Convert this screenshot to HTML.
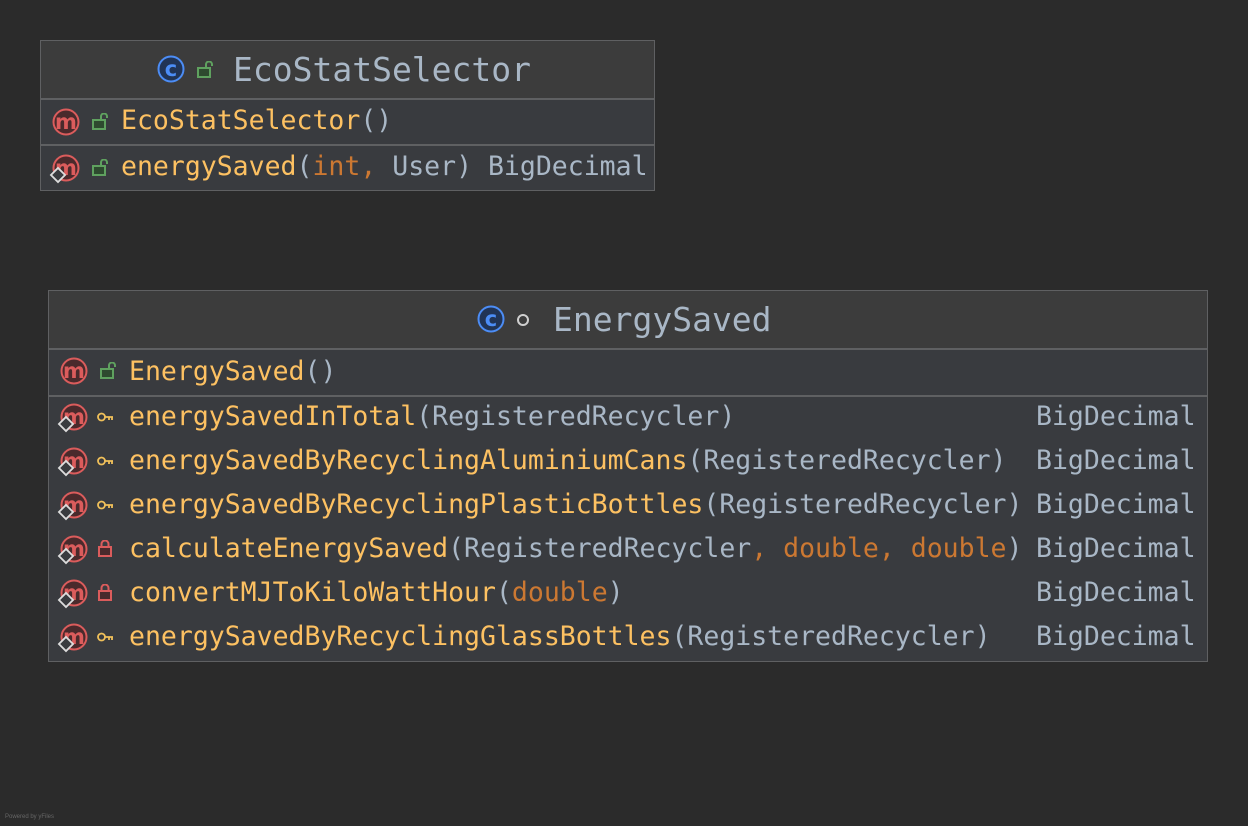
<!DOCTYPE html>
<html><head><meta charset="utf-8"><style>
body{margin:0;width:1248px;height:826px;background:#2b2b2b;position:relative;overflow:hidden;font-family:"DejaVu Sans Mono","Liberation Mono",monospace}
.box{position:absolute;border:1px solid #5f6062;background:#393b3f}
.hdr{position:absolute;left:0;right:0;top:0;height:57px;background:#3c3c3c;border-bottom:2px solid #5f6062}
.sep{position:absolute;left:0;right:0;height:2px;background:#5f6062}
.t{position:absolute;white-space:pre;font-size:26.5px;line-height:44px;letter-spacing:0}
.title{position:absolute;white-space:pre;font-size:33px;line-height:57px;color:#a9b7c6}
.n{color:#fdc162}.p{color:#a9b7c6}.k{color:#cc7832}
svg{position:absolute}
</style></head><body>
<svg width="0" height="0" style="position:absolute"><defs>
<g id="m"><circle cx="14" cy="14" r="12.5" fill="#4a2a2c" stroke="#db5c5c" stroke-width="2"/><text x="14" y="21" font-family="DejaVu Sans" font-size="21" font-weight="bold" fill="#db5c5c" text-anchor="middle">m</text></g>
<g id="d"><rect x="-5" y="-5" width="10" height="10" transform="rotate(45)" fill="#393b3f" stroke="#dcdcdc" stroke-width="1.8"/></g>
<g id="lk"><rect x="1" y="7" width="12" height="9" fill="#2e4a2f" stroke="#5fa15f" stroke-width="2"/><path d="M9 7V3.5a3 3 0 0 1 6 0V5" fill="none" stroke="#5fa15f" stroke-width="2"/></g>
<g id="rl"><rect x="1" y="7" width="12" height="9" fill="#4a2a2c" stroke="#db5c5c" stroke-width="2"/><path d="M3.5 7V4a3.5 3.5 0 0 1 7 0V7" fill="none" stroke="#db5c5c" stroke-width="2"/></g>
<g id="ky"><circle cx="4.5" cy="5" r="3.5" fill="none" stroke="#f0c05a" stroke-width="1.8"/><path d="M8 5H16M12 5V8M15 5V8" fill="none" stroke="#f0c05a" stroke-width="1.8"/></g>
<g id="c"><circle cx="14" cy="14" r="12.5" fill="#213456" stroke="#4c8df6" stroke-width="2"/><text x="14" y="21" font-family="DejaVu Sans" font-size="21" font-weight="bold" fill="#4c8df6" text-anchor="middle">c</text></g>
</defs></svg>

<div class="box" style="left:40px;top:40px;width:613px;height:149px">
 <div class="hdr"></div>
 <div class="sep" style="top:103px"></div>
 <div class="title" style="left:192px;top:0">EcoStatSelector</div>
 <div class="t n" style="left:80px;top:58px">EcoStatSelector<span class="p">()</span></div>
 <div class="t n" style="left:80px;top:104px">energySaved<span class="p">(</span><span class="k">int, </span><span class="p">User) BigDecimal</span></div>
</div>
<svg style="left:157px;top:55px" width="30" height="30"><use href="#c"/></svg>
<svg style="left:197px;top:61px" width="18" height="18"><use href="#lk"/></svg>
<svg style="left:52px;top:108px" width="30" height="30"><use href="#m"/></svg>
<svg style="left:92px;top:113px" width="18" height="18"><use href="#lk"/></svg>
<svg style="left:52px;top:154px" width="30" height="30"><use href="#m"/></svg>
<svg style="left:92px;top:159px" width="18" height="18"><use href="#lk"/></svg>
<svg style="left:48px;top:165px" width="20" height="20"><g transform="translate(10,10)"><use href="#d"/></g></svg>

<div class="box" style="left:48px;top:290px;width:1158px;height:370px">
 <div class="hdr"></div>
 <div class="sep" style="top:104px"></div>
 <div class="title" style="left:504px;top:0">EnergySaved</div>
 <div class="t n" style="left:80px;top:59px">EnergySaved<span class="p">()</span></div>
 <div class="t n" style="left:80px;top:104px">energySavedInTotal<span class="p">(RegisteredRecycler)</span></div>
 <div class="t n" style="left:80px;top:148px">energySavedByRecyclingAluminiumCans<span class="p">(RegisteredRecycler)</span></div>
 <div class="t n" style="left:80px;top:192px">energySavedByRecyclingPlasticBottles<span class="p">(RegisteredRecycler)</span></div>
 <div class="t n" style="left:80px;top:236px">calculateEnergySaved<span class="p">(RegisteredRecycler</span><span class="k">, double, double</span><span class="p">)</span></div>
 <div class="t n" style="left:80px;top:280px">convertMJToKiloWattHour<span class="p">(</span><span class="k">double</span><span class="p">)</span></div>
 <div class="t n" style="left:80px;top:324px">energySavedByRecyclingGlassBottles<span class="p">(RegisteredRecycler)</span></div>
 <div class="t p" style="left:987px;top:104px">BigDecimal</div>
 <div class="t p" style="left:987px;top:148px">BigDecimal</div>
 <div class="t p" style="left:987px;top:192px">BigDecimal</div>
 <div class="t p" style="left:987px;top:236px">BigDecimal</div>
 <div class="t p" style="left:987px;top:280px">BigDecimal</div>
 <div class="t p" style="left:987px;top:324px">BigDecimal</div>
</div>
<svg style="left:477px;top:305px" width="30" height="30"><use href="#c"/></svg>
<svg style="left:515px;top:312px" width="16" height="16"><circle cx="8" cy="8" r="5" fill="none" stroke="#cfcfcf" stroke-width="2"/></svg>
<svg style="left:60px;top:357px" width="30" height="30"><use href="#m"/></svg>
<svg style="left:100px;top:362px" width="18" height="18"><use href="#lk"/></svg>

<svg style="left:60px;top:403px" width="30" height="30"><use href="#m"/></svg><svg style="left:56px;top:414px" width="20" height="20"><g transform="translate(10,10)"><use href="#d"/></g></svg><svg style="left:97px;top:412px" width="18" height="12"><use href="#ky"/></svg>
<svg style="left:60px;top:447px" width="30" height="30"><use href="#m"/></svg><svg style="left:56px;top:458px" width="20" height="20"><g transform="translate(10,10)"><use href="#d"/></g></svg><svg style="left:97px;top:456px" width="18" height="12"><use href="#ky"/></svg>
<svg style="left:60px;top:491px" width="30" height="30"><use href="#m"/></svg><svg style="left:56px;top:502px" width="20" height="20"><g transform="translate(10,10)"><use href="#d"/></g></svg><svg style="left:97px;top:500px" width="18" height="12"><use href="#ky"/></svg>
<svg style="left:60px;top:535px" width="30" height="30"><use href="#m"/></svg><svg style="left:56px;top:546px" width="20" height="20"><g transform="translate(10,10)"><use href="#d"/></g></svg><svg style="left:98px;top:540px" width="16" height="18"><use href="#rl"/></svg>
<svg style="left:60px;top:579px" width="30" height="30"><use href="#m"/></svg><svg style="left:56px;top:590px" width="20" height="20"><g transform="translate(10,10)"><use href="#d"/></g></svg><svg style="left:98px;top:584px" width="16" height="18"><use href="#rl"/></svg>
<svg style="left:60px;top:623px" width="30" height="30"><use href="#m"/></svg><svg style="left:56px;top:634px" width="20" height="20"><g transform="translate(10,10)"><use href="#d"/></g></svg><svg style="left:97px;top:632px" width="18" height="12"><use href="#ky"/></svg>

<div style="position:absolute;left:5px;top:814px;font-family:'Liberation Sans',sans-serif;font-size:6px;color:#666">Powered by yFiles</div>
</body></html>
